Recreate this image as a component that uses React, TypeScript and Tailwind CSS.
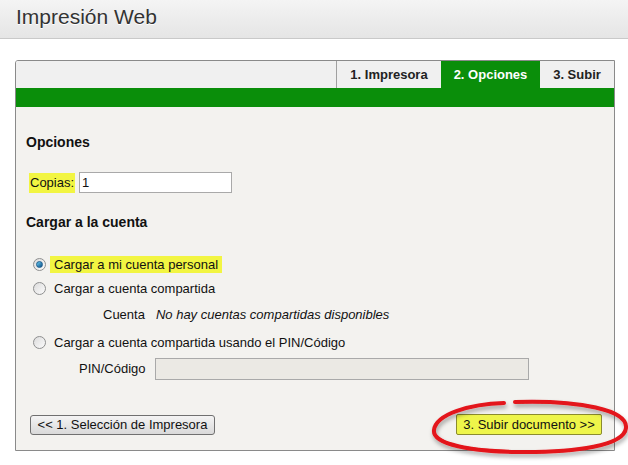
import React, { useState } from 'react';

const font = { fontFamily: '"Liberation Sans", Arial, sans-serif' };

type Choice = 'personal' | 'shared' | 'pin';

const Radio: React.FC<{ checked: boolean; onClick: () => void }> = ({ checked, onClick }) => (
  <span
    onClick={onClick}
    className="w-[13px] h-[13px] rounded-full border border-[#8e8f8f] bg-gradient-to-br from-[#dcdcdc] to-[#fbfbfb] flex items-center justify-center shrink-0 cursor-pointer"
  >
    {checked && (
      <span className="w-[7px] h-[7px] rounded-full bg-gradient-to-br from-[#6ad0f5] to-[#0b4f86] border border-[#1b5c8d]" />
    )}
  </span>
);

const App: React.FC = () => {
  const [copies, setCopies] = useState('1');
  const [choice, setChoice] = useState<Choice>('personal');

  return (
    <div className="w-[628px] h-[465px] bg-white relative overflow-hidden text-[13px] text-[#111]" style={font}>
      {/* Page header */}
      <header className="h-[39px] bg-gradient-to-b from-[#f4f4f4] to-[#e5e5e5] border-b border-[#c9c9c9] flex items-center px-[16px]">
        <h1 className="text-[21px] text-[#333] leading-none mb-[6px] [text-shadow:0_1px_0_#fff]">Impresión Web</h1>
      </header>

      {/* Wizard panel */}
      <div className="ml-[15px] mt-[21px] w-[600px] h-[391px] border border-[#8a8a8a] rounded-tl-[3px] flex flex-col overflow-hidden">
        <div className="h-[27px] bg-[#f0f0f0] flex justify-end shrink-0">
          <div className="w-[105px] border-l border-[#a0a0a0] flex items-center justify-center font-bold text-[#222]">1. Impresora</div>
          <div className="w-[99px] bg-[#0a8e0a] flex items-center justify-center font-bold text-white">2. Opciones</div>
          <div className="w-[74px] flex items-center justify-center font-bold text-[#222]">3. Subir</div>
        </div>
        <div className="h-[19px] bg-[#0a8e0a] shrink-0" />

        <div className="flex-1 bg-[#f3f2ef] px-[10px] flex flex-col">
          <h2 className="mt-[27px] text-[14px] font-bold leading-[16px]">Opciones</h2>

          <div className="mt-[22px] flex items-center h-[21px]">
            <span className="ml-[3px] bg-[#f2f542] px-[1px] h-[20px] flex items-center">Copias:</span>
            <input
              value={copies}
              onChange={(e) => setCopies(e.target.value)}
              className="ml-[4px] w-[153px] h-[21px] border border-[#a9a9a9] bg-white px-[2px] text-[13px] outline-none"
              style={font}
            />
          </div>

          <h2 className="mt-[21px] text-[14px] font-bold leading-[16px]">Cargar a la cuenta</h2>

          <div className="mt-[26px] flex items-center h-[17px] pl-[7px]">
            <Radio checked={choice === 'personal'} onClick={() => setChoice('personal')} />
            <span className="ml-[4px] bg-[#f2f542] px-[4px] h-[17px] flex items-center">Cargar a mi cuenta personal</span>
          </div>
          <div className="mt-[7px] flex items-center h-[17px] pl-[7px]">
            <Radio checked={choice === 'shared'} onClick={() => setChoice('shared')} />
            <span className="ml-[8px]">Cargar a cuenta compartida</span>
          </div>
          <div className="mt-[9px] flex items-center h-[17px] pl-[77px]">
            <span>Cuenta</span>
            <span className="ml-[11px] italic">No hay cuentas compartidas disponibles</span>
          </div>
          <div className="mt-[11px] flex items-center h-[17px] pl-[7px]">
            <Radio checked={choice === 'pin'} onClick={() => setChoice('pin')} />
            <span className="ml-[8px]">Cargar a cuenta compartida usando el PIN/Código</span>
          </div>
          <div className="mt-[7px] flex items-center h-[22px] pl-[53px]">
            <span>PIN/Código</span>
            <input
              disabled
              className="ml-[10px] w-[374px] h-[22px] border border-[#a9a9a9] bg-[#ebe9e4]"
            />
          </div>

          <div className="mt-[34px] flex items-center justify-between pl-[4px] pr-[2px]">
            <button className="h-[20px] w-[185px] rounded-[3px] border border-[#707070] bg-gradient-to-b from-[#f4f4f4] to-[#d9d9d9] text-[13px] leading-none" style={font}>
              &lt;&lt; 1. Selección de Impresora
            </button>
            <button className="h-[21px] w-[146px] rounded-[2px] border border-[#8b8b2e] bg-[#eef54a] text-[13px] leading-none" style={font}>
              3. Subir documento &gt;&gt;
            </button>
          </div>
        </div>
      </div>

      {/* Hand-drawn red ring around the next-step button */}
      <svg className="absolute left-0 top-0 pointer-events-none" width="628" height="465" viewBox="0 0 628 465">
        <defs>
          <filter id="ringShadow" x="-10%" y="-30%" width="120%" height="160%">
            <feDropShadow dx="1" dy="3" stdDeviation="2" floodColor="#000" floodOpacity="0.35" />
          </filter>
        </defs>
        <path
          d="M 515 402 C 580 400, 628 410, 626 428 C 624 446, 575 452, 525 452 C 470 452, 432 444, 434 430 C 436 414, 470 404, 504 403"
          fill="none"
          stroke="#e3141a"
          strokeWidth="4"
          strokeLinecap="round"
          filter="url(#ringShadow)"
        />
        <path
          d="M 436 436 C 448 448, 490 452, 540 451"
          fill="none"
          stroke="#e3141a"
          strokeWidth="2"
          strokeLinecap="round"
        />
      </svg>
    </div>
  );
};

export default App;
